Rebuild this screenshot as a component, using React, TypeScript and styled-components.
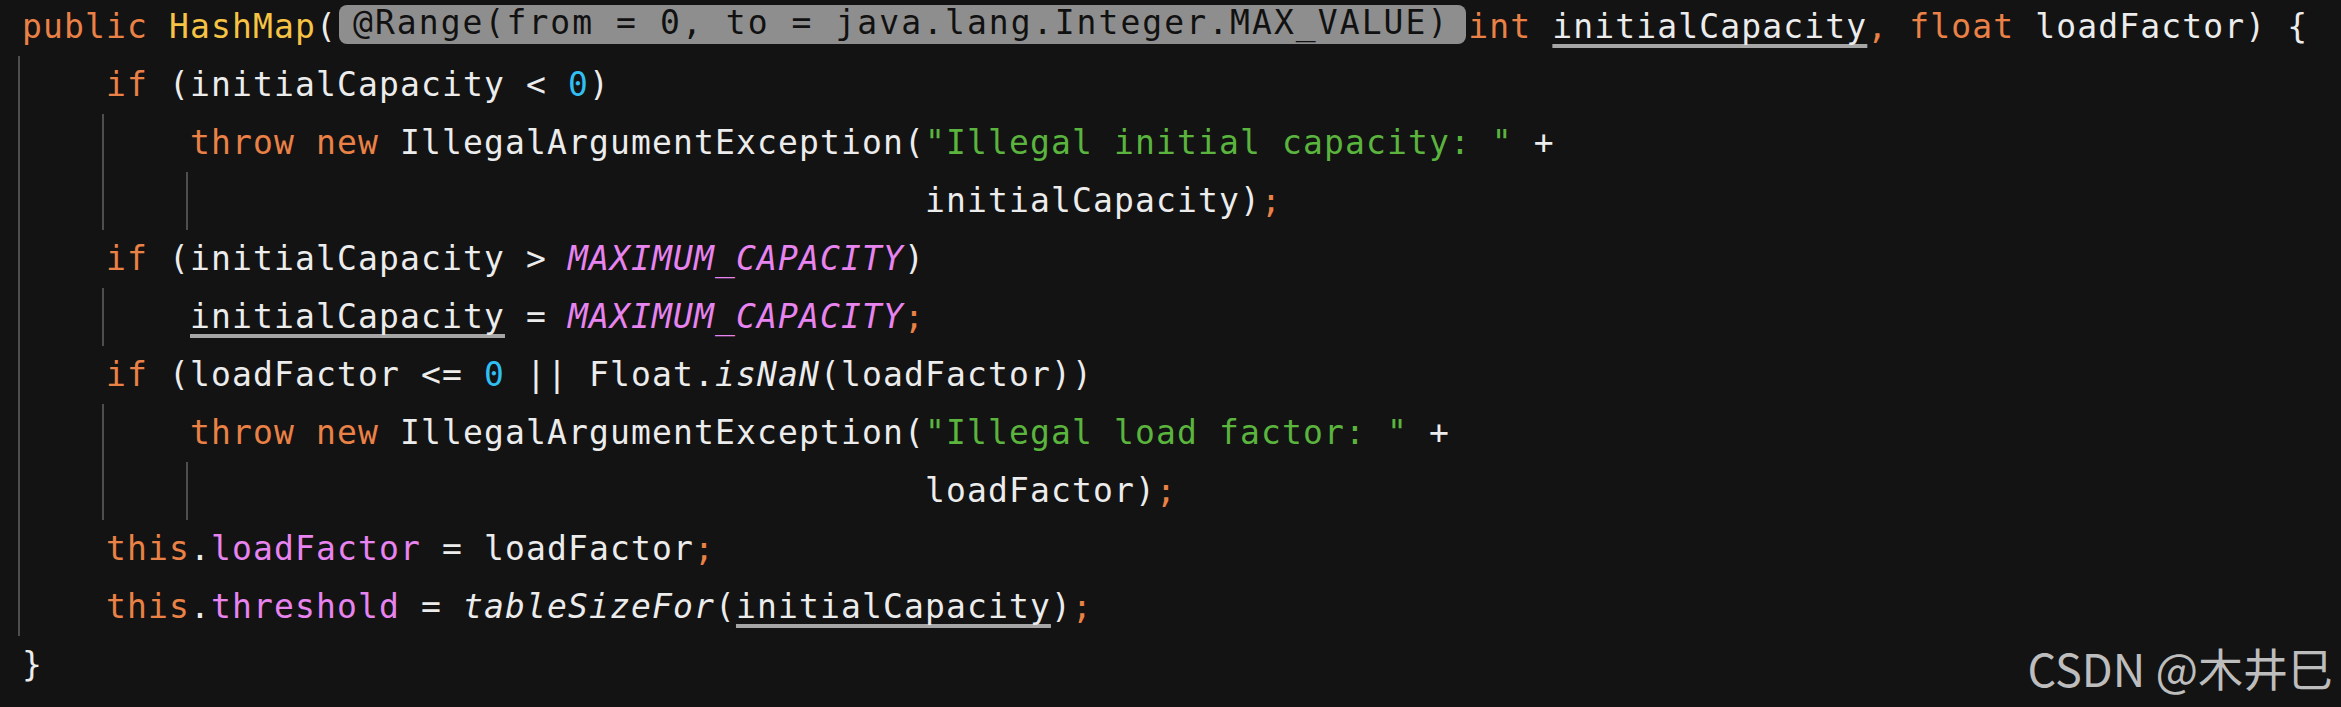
import React from "react";
import styled, { createGlobalStyle, css } from "styled-components";

// --- CONSTANTS ---
const CELL = 21;
const ROW_H = 58;
const INDENT = CELL * 4;

const COLORS = {
  kw: "#ea8146",
  type: "#f6c345",
  id: "#ececec",
  num: "#30bff2",
  str: "#5ab43e",
  field: "#e884f0",
};

type Kind = "kw" | "type" | "id" | "num" | "str" | "field" | "const" | "call" | "semi" | "ul" | "hint";
type Seg = [Kind, string];
type Line = { guides: number; segs: Seg[] };

const PAD = " ".repeat(31);

const lines: Line[] = [
  {
    guides: 0,
    segs: [
      ["kw", "public "],
      ["type", "HashMap"],
      ["id", "("],
      ["hint", "@Range(from = 0, to = java.lang.Integer.MAX_VALUE)"],
      ["kw", "int "],
      ["ul", "initialCapacity"],
      ["kw", ", float "],
      ["id", "loadFactor) {"],
    ],
  },
  {
    guides: 1,
    segs: [
      ["kw", "if"],
      ["id", " (initialCapacity < "],
      ["num", "0"],
      ["id", ")"],
    ],
  },
  {
    guides: 2,
    segs: [
      ["kw", "throw new "],
      ["id", "IllegalArgumentException("],
      ["str", '"Illegal initial capacity: "'],
      ["id", " +"],
    ],
  },
  { guides: 3, segs: [["id", PAD + "initialCapacity)"], ["semi", ";"]] },
  {
    guides: 1,
    segs: [
      ["kw", "if"],
      ["id", " (initialCapacity > "],
      ["const", "MAXIMUM_CAPACITY"],
      ["id", ")"],
    ],
  },
  {
    guides: 2,
    segs: [
      ["ul", "initialCapacity"],
      ["id", " = "],
      ["const", "MAXIMUM_CAPACITY"],
      ["semi", ";"],
    ],
  },
  {
    guides: 1,
    segs: [
      ["kw", "if"],
      ["id", " (loadFactor <= "],
      ["num", "0"],
      ["id", " || Float."],
      ["call", "isNaN"],
      ["id", "(loadFactor))"],
    ],
  },
  {
    guides: 2,
    segs: [
      ["kw", "throw new "],
      ["id", "IllegalArgumentException("],
      ["str", '"Illegal load factor: "'],
      ["id", " +"],
    ],
  },
  { guides: 3, segs: [["id", PAD + "loadFactor)"], ["semi", ";"]] },
  {
    guides: 1,
    segs: [
      ["kw", "this"],
      ["id", "."],
      ["field", "loadFactor"],
      ["id", " = loadFactor"],
      ["semi", ";"],
    ],
  },
  {
    guides: 1,
    segs: [
      ["kw", "this"],
      ["id", "."],
      ["field", "threshold"],
      ["id", " = "],
      ["call", "tableSizeFor"],
      ["id", "("],
      ["ul", "initialCapacity"],
      ["id", ")"],
      ["semi", ";"],
    ],
  },
  { guides: 0, segs: [["id", "}"]] },
];

// --- STYLES ---
const GlobalStyle = createGlobalStyle`
  html, body {
    margin: 0;
    padding: 0;
    background: #131313;
  }
`;

const Editor = styled.div`
  position: relative;
  min-height: 100vh;
  background: #131313;
  overflow: hidden;
  font-family: "DejaVu Sans Mono", "Liberation Mono", monospace;
  font-size: 33px;
  letter-spacing: 1.13px;
`;

const CodeBlock = styled.div`
  margin-top: -2px;
  display: flex;
  flex-direction: column;
`;

const Row = styled.div`
  display: flex;
  height: ${ROW_H}px;
  padding-left: 18px;
`;

const Guide = styled.span`
  flex-shrink: 0;
  width: ${INDENT}px;
  border-left: 2px solid #4e4e4e;
  box-sizing: border-box;
`;

const Code = styled.span`
  padding-left: 4px;
  white-space: pre;
  line-height: ${ROW_H}px;
`;

const Tok = styled.span<{ $k: Kind }>`
  color: ${(p) =>
    p.$k === "kw" || p.$k === "semi"
      ? COLORS.kw
      : p.$k === "type"
      ? COLORS.type
      : p.$k === "num"
      ? COLORS.num
      : p.$k === "str"
      ? COLORS.str
      : p.$k === "field" || p.$k === "const"
      ? COLORS.field
      : COLORS.id};
  ${(p) =>
    (p.$k === "const" || p.$k === "call") &&
    css`
      font-style: italic;
    `}
  ${(p) =>
    p.$k === "ul" &&
    css`
      text-decoration: underline;
      text-decoration-color: #a6a6a6;
      text-decoration-thickness: 4px;
      text-underline-offset: 6px;
      text-decoration-skip-ink: none;
    `}
`;

const Hint = styled.span`
  display: inline-block;
  height: 39px;
  box-sizing: border-box;
  padding: 1px 17px 5px 14px;
  margin: 0 2px;
  line-height: 33px;
  vertical-align: 4px;
  border-radius: 8px;
  background: #8e8e8e;
  color: #111111;
  letter-spacing: 2.06px;
`;

const Watermark = styled.div`
  position: absolute;
  right: 8px;
  bottom: 16px;
  font-family: "Noto Sans CJK SC", "Noto Sans", sans-serif;
  font-size: 45px;
  line-height: 47px;
  letter-spacing: 0;
  color: #bdbdbd;
`;

const App: React.FC = () => {
  return (
    <Editor>
      <GlobalStyle />
      <CodeBlock>
        {lines.map((line, i) => (
          <Row key={i}>
            {Array.from({ length: line.guides }).map((_, g) => (
              <Guide key={g} />
            ))}
            <Code>
              {line.segs.map(([k, text], j) =>
                k === "hint" ? (
                  <Hint key={j}>{text}</Hint>
                ) : (
                  <Tok key={j} $k={k}>
                    {text}
                  </Tok>
                )
              )}
            </Code>
          </Row>
        ))}
      </CodeBlock>
      <Watermark>CSDN @木井巳</Watermark>
    </Editor>
  );
};

export default App;
